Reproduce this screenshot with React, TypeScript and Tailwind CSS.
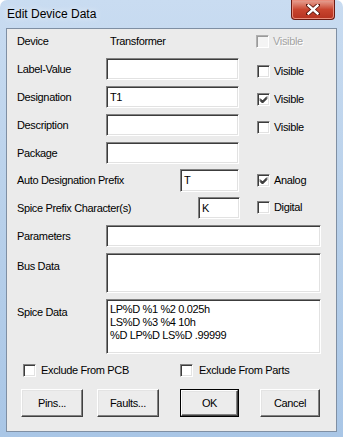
import * as React from 'react';

const font = { fontFamily: '"Liberation Sans", Arial, sans-serif' };

const sunken =
  'bg-white border-t border-l border-t-[#828282] border-l-[#828282] border-b border-r border-b-white border-r-white shadow-[inset_1px_1px_0_#3c3c3c,inset_-1px_-1px_0_#e2e2e2]';

const TextBox: React.FC<{ w: string; h: string; value?: string; multi?: boolean }> = ({ w, h, value, multi }) => (
  <div className={`${sunken} ${w} ${h} shrink-0 px-[3px] text-[11px] tracking-[-0.35px] text-black leading-[13px] ${multi ? 'pt-[3px]' : 'flex items-center'}`}>
    {multi ? (
      <div className="whitespace-pre">{value}</div>
    ) : (
      <span>{value}</span>
    )}
  </div>
);

const CheckBox: React.FC<{ checked?: boolean; disabled?: boolean }> = ({ checked, disabled }) => (
  <div
    className={
      disabled
        ? 'w-[13px] h-[13px] shrink-0 bg-[#f4f4f4] border border-t-[#b0b0b0] border-l-[#b0b0b0] border-b-white border-r-white shadow-[inset_1px_1px_0_#9a9a9a]'
        : `w-[13px] h-[13px] shrink-0 flex items-center justify-center ${sunken}`
    }
  >
    {checked && (
      <svg width="9" height="9" viewBox="0 0 9 9">
        <path d="M1 3.5 L3.5 6 L8 1.5 M1 4.5 L3.5 7 L8 2.5 M1 5.5 L3.5 8 L8 3.5" stroke="#000" strokeWidth="1" fill="none" />
      </svg>
    )}
  </div>
);

const Check: React.FC<{ label: string; checked?: boolean; disabled?: boolean; className?: string }> = ({ label, checked, disabled, className }) => (
  <div className={`flex items-center ${className || ''}`}>
    <CheckBox checked={checked} disabled={disabled} />
    <span className={`ml-[4px] ${disabled ? 'text-[#a3a3a3] [text-shadow:1px_1px_0_#fff]' : 'text-black'}`}>{label}</span>
  </div>
);

const Button: React.FC<{ label: string; w: string; isDefault?: boolean; className?: string }> = ({ label, w, isDefault, className }) => {
  const inner = (
    <div className="h-full w-full flex items-center justify-center bg-[#ececec] border border-t-white border-l-white border-b-[#404040] border-r-[#404040] shadow-[inset_-1px_-1px_0_#828282,inset_1px_1px_0_#e3e3e3]">
      {label}
    </div>
  );
  return (
    <div className={`${w} h-[28px] shrink-0 ${isDefault ? 'border border-black' : ''} ${className || ''}`}>
      {inner}
    </div>
  );
};

const Row: React.FC<{ label: string; labelW: string; mt: string; h: string; top?: boolean; children?: React.ReactNode }> = ({ label, labelW, mt, h, top, children }) => (
  <div className={`flex ${top ? 'items-start' : 'items-center'} ${mt} ${h}`}>
    <div className={`${labelW} shrink-0 ${top ? 'pt-[5px]' : ''}`}>{label}</div>
    {children}
  </div>
);

export default function App() {
  return (
    <div
      className="w-[343px] h-[437px] rounded-t-[7px] overflow-hidden bg-gradient-to-b from-[#c9dcf1] via-[#b8d0ea] to-[#a9c6e6] flex flex-col relative"
      style={font}
    >
      {/* title bar */}
      <div className="h-[28px] shrink-0 flex items-center pl-[7px] relative">
        <span className="text-[12px] text-black [text-shadow:0_0_6px_#ffffff]">Edit Device Data</span>
        <div className="absolute right-[8px] top-0 w-[44px] h-[20px] rounded-b-[4px] border border-t-0 border-[#6b1b12] bg-gradient-to-b from-[#e6a497] via-[#c9452f] to-[#b53220] flex items-center justify-center shadow-[inset_0_0_0_1px_#e98d7c]">
          <svg width="14" height="11" viewBox="0 0 14 11">
            <path d="M2 1 L12 10 M12 1 L2 10" stroke="#5a150c" strokeWidth="4" strokeLinecap="square" />
            <path d="M2.5 1.5 L11.5 9.5 M11.5 1.5 L2.5 9.5" stroke="#fff" strokeWidth="2.4" strokeLinecap="square" />
          </svg>
        </div>
      </div>

      {/* client area */}
      <div className="mx-[6px] h-[404px] shrink-0 bg-[#ebebeb] border border-[#7f8fa3] pl-[10px] flex flex-col text-[11px] tracking-[-0.35px] text-black">
        <div className="flex items-center mt-[4px] h-[17px]">
          <div className="w-[93px] shrink-0">Device</div>
          <div className="w-[146px] shrink-0">Transformer</div>
          <Check label="Visible" disabled />
        </div>

        <Row label="Label-Value" labelW="w-[89px]" mt="mt-[8px]" h="h-[22px]">
          <TextBox w="w-[133px]" h="h-[22px]" />
          <Check label="Visible" className="ml-[18px] mt-[4px]" />
        </Row>
        <Row label="Designation" labelW="w-[89px]" mt="mt-[6px]" h="h-[22px]">
          <TextBox w="w-[133px]" h="h-[22px]" value="T1" />
          <Check label="Visible" checked className="ml-[18px] mt-[4px]" />
        </Row>
        <Row label="Description" labelW="w-[89px]" mt="mt-[6px]" h="h-[22px]">
          <TextBox w="w-[133px]" h="h-[22px]" />
          <Check label="Visible" className="ml-[18px] mt-[4px]" />
        </Row>
        <Row label="Package" labelW="w-[89px]" mt="mt-[6px]" h="h-[22px]">
          <TextBox w="w-[133px]" h="h-[22px]" />
        </Row>
        <Row label="Auto Designation Prefix" labelW="w-[163px]" mt="mt-[5px]" h="h-[23px]">
          <TextBox w="w-[59px]" h="h-[23px]" value="T" />
          <Check label="Analog" checked className="ml-[18px]" />
        </Row>
        <Row label="Spice Prefix Character(s)" labelW="w-[181px]" mt="mt-[5px]" h="h-[22px]">
          <TextBox w="w-[42px]" h="h-[22px]" value="K" />
          <Check label="Digital" className="ml-[17px] -mt-[2px]" />
        </Row>
        <Row label="Parameters" labelW="w-[89px]" mt="mt-[6px]" h="h-[22px]">
          <TextBox w="w-[215px]" h="h-[22px]" />
        </Row>
        <Row label="Bus Data" labelW="w-[89px]" mt="mt-[6px]" h="h-[40px]" top>
          <TextBox w="w-[215px]" h="h-[40px]" />
        </Row>
        <Row label="Spice Data" labelW="w-[89px]" mt="mt-[6px]" h="h-[55px]" top>
          <TextBox w="w-[215px]" h="h-[55px]" multi value={'LP%D %1 %2 0.025h\nLS%D %3 %4 10h\n%D LP%D LS%D .99999'} />
        </Row>

        <div className="flex items-center mt-[9px] h-[15px] pl-[6px]">
          <div className="w-[157px] shrink-0">
            <Check label="Exclude From PCB" className="[&>span]:ml-[5px]" />
          </div>
          <Check label="Exclude From Parts" className="[&>span]:ml-[6px]" />
        </div>

        <div className="flex items-center mt-[11px] pl-[4px]">
          <Button label="Pins..." w="w-[62px]" />
          <Button label="Faults..." w="w-[62px]" className="ml-[14px]" />
          <Button label="OK" w="w-[59px]" isDefault className="ml-[21px]" />
          <Button label="Cancel" w="w-[60px]" className="ml-[21px]" />
        </div>
      </div>
    </div>
  );
}
